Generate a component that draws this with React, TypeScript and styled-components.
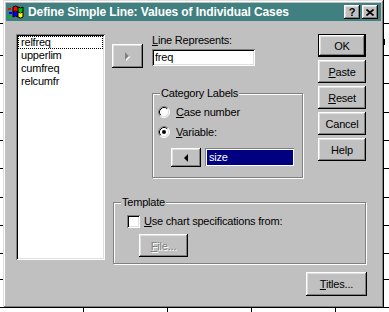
import styled, { createGlobalStyle } from 'styled-components';

const GlobalStyle = createGlobalStyle`
  html, body {
    margin: 0;
    padding: 0;
    background: #fff;
  }
  body {
    font-family: "Liberation Sans", Arial, sans-serif;
    font-size: 11px;
    letter-spacing: -0.2px;
    color: #000;
  }
  * {
    box-sizing: border-box;
  }
`;

const tickRows = [23, 55, 83, 112, 140, 168, 197, 225, 253, 279];
const tickCols = [83, 167, 251, 335];

const raised =
  'inset -1px -1px #000, inset 1px 1px #fff, inset -2px -2px #808080, inset 2px 2px #dfdfdf';
const sunken =
  'inset 1px 1px #808080, inset -1px -1px #fff, inset 2px 2px #000, inset -2px -2px #dfdfdf';

const ChartBehind = () => (
  <Backdrop width="389" height="312" viewBox="0 0 389 312">
    {tickRows.map((y) => (
      <g key={y}>
        <rect x="0" y={y} width="4" height="1" fill="#000" />
        <rect x="383" y={y} width="6" height="1" fill="#000" />
      </g>
    ))}
    <rect x="383" y="39" width="2" height="6" fill="#000" />
    <rect x="0" y="307" width="389" height="1" fill="#000" />
    {tickCols.map((x) => (
      <rect key={x} x={x} y="307" width="1" height="5" fill="#000" />
    ))}
  </Backdrop>
);

const AppIcon = () => (
  <svg width="16" height="16" viewBox="0 0 16 16">
    <defs>
      <clipPath id="flag">
        <path d="M5 3 Q7.5 1 10 3 Q12.5 5 15 3 V13 Q12.5 15 10 13 Q7.5 11 5 13 Z" />
      </clipPath>
    </defs>
    <rect x="0" y="4" width="3" height="2" fill="#ff0000" />
    <rect x="1" y="8" width="3" height="2" fill="#0000ff" />
    <rect x="0" y="12" width="3" height="2" fill="#00c000" />
    <g clipPath="url(#flag)">
      <rect x="4" y="0" width="6" height="8" fill="#ff0000" />
      <rect x="10" y="0" width="6" height="8" fill="#00c000" />
      <rect x="4" y="8" width="6" height="8" fill="#0000ff" />
      <rect x="10" y="8" width="6" height="8" fill="#ffff00" />
    </g>
    <path
      d="M5 3 Q7.5 1 10 3 Q12.5 5 15 3 V13 Q12.5 15 10 13 Q7.5 11 5 13 Z M10 3 V13 M5 8 Q7.5 6 10 8 Q12.5 10 15 8"
      fill="none"
      stroke="#000"
      strokeWidth="1"
    />
  </svg>
);

const CloseGlyph = () => (
  <svg width="8" height="7" viewBox="0 0 8 7">
    <path d="M0.5 0.5 L7.5 6.5 M7.5 0.5 L0.5 6.5" stroke="#000" strokeWidth="1.7" />
  </svg>
);

const RadioMark = ({ checked }: { checked?: boolean }) => (
  <svg width="12" height="12" viewBox="0 0 12 12">
    <circle cx="6" cy="6" r="5" fill="#fff" />
    <path d="M2.11 9.89 A5.5 5.5 0 0 1 9.89 2.11" stroke="#808080" fill="none" />
    <path d="M9.89 2.11 A5.5 5.5 0 0 1 2.11 9.89" stroke="#fff" fill="none" />
    <path d="M2.82 9.18 A4.5 4.5 0 0 1 9.18 2.82" stroke="#000" fill="none" />
    <path d="M9.18 2.82 A4.5 4.5 0 0 1 2.82 9.18" stroke="#dfdfdf" fill="none" />
    {checked && <circle cx="6" cy="6" r="2" fill="#000" />}
  </svg>
);

const RightTriangle = () => (
  <svg width="6" height="9" viewBox="0 0 6 9">
    <polygon points="1,1 5,5 1,9" fill="#fff" />
    <polygon points="0,0 4,4 0,8" fill="#808080" />
  </svg>
);

const LeftTriangle = () => (
  <svg width="4" height="8" viewBox="0 0 4 8">
    <polygon points="4,0 0,4 4,8" fill="#000" />
  </svg>
);

const App = () => {
	return (
		<>
			<GlobalStyle />
			<Screen>
				<ChartBehind />
				<Window>
					<TitleBar>
						<AppIcon />
						<Caption>Define Simple Line: Values of Individual Cases</Caption>
						<CaptionButton>?</CaptionButton>
						<CaptionButton $gap>
							<CloseGlyph />
						</CaptionButton>
					</TitleBar>
					<Body>
						<ListBox>
							<ListItem $focused>relfreq</ListItem>
							<ListItem>upperlim</ListItem>
							<ListItem>cumfreq</ListItem>
							<ListItem>relcumfr</ListItem>
						</ListBox>
						<Side>
							<TopRow>
								<MoveButton $w={31} $h={24} $mt={10}>
									<RightTriangle />
								</MoveButton>
								<Fields>
									<FieldLabel>
										<u>L</u>ine Represents:
									</FieldLabel>
									<TextField>freq</TextField>
									<Group $w={151} $h={85} $mt={27} $pt={10} $pl={5}>
										<GroupTitle>Category Labels</GroupTitle>
										<OptionRow>
											<RadioMark />
											<span>
												<u>C</u>ase number
											</span>
										</OptionRow>
										<OptionRow $mt={4}>
											<RadioMark checked />
											<span>
												<u>V</u>ariable:
											</span>
										</OptionRow>
										<PickRow>
											<MoveButton $w={30} $h={19}>
												<LeftTriangle />
											</MoveButton>
											<SelectedField>size</SelectedField>
										</PickRow>
									</Group>
								</Fields>
								<ButtonColumn>
									<PushButton $default>OK</PushButton>
									<PushButton>
										<u>P</u>aste
									</PushButton>
									<PushButton>
										<u>R</u>eset
									</PushButton>
									<PushButton>Cancel</PushButton>
									<PushButton>Help</PushButton>
								</ButtonColumn>
							</TopRow>
							<Group $w={253} $h={62} $mt={24} $ml={1} $pt={10} $pl={13}>
								<GroupTitle>Template</GroupTitle>
								<OptionRow $gap={4}>
									<CheckBox />
									<span>
										<u>U</u>se chart specifications from:
									</span>
								</OptionRow>
								<PushButton $w={49} $mt={5} $ml={12} disabled>
									<u>F</u>ile...
								</PushButton>
							</Group>
							<Footer>
								<PushButton $w={61} $h={24}>
									<u>T</u>itles...
								</PushButton>
							</Footer>
						</Side>
					</Body>
				</Window>
			</Screen>
		</>
	);
};

export default App;

const Screen = styled.div`
	position: relative;
	width: 389px;
	height: 312px;
	overflow: hidden;
	background: #fff;
`;

const Backdrop = styled.svg`
	position: absolute;
	left: 0;
	top: 0;
	display: block;
`;

const Window = styled.div`
	position: absolute;
	left: 3px;
	top: 0;
	width: 381px;
	height: 308px;
	padding: 3px;
	background: #c0c0c0;
	box-shadow: inset -1px -1px #000, inset 1px 1px #dfdfdf, inset -2px -2px #808080,
		inset 2px 2px #fff;
	display: flex;
	flex-direction: column;
`;

const TitleBar = styled.div`
	height: 18px;
	display: flex;
	align-items: center;
	padding: 0 3px 0 2px;
	background: #408080;
	color: #fff;
`;

const Caption = styled.div`
	flex: 1;
	margin-left: 4px;
	font-weight: bold;
	font-size: 12px;
	letter-spacing: -0.1px;
	white-space: nowrap;
`;

const CaptionButton = styled.div<{ $gap?: boolean }>`
	width: 16px;
	height: 14px;
	margin-left: ${({ $gap }) => ($gap ? '2px' : '0')};
	display: flex;
	align-items: center;
	justify-content: center;
	background: #c0c0c0;
	box-shadow: ${raised};
	color: #000;
	font-weight: bold;
	font-size: 11px;
	line-height: 14px;
`;

const Body = styled.div`
	flex: 1;
	display: flex;
	align-items: flex-start;
	padding: 13px 0 0 10px;
`;

const ListBox = styled.div`
	width: 89px;
	height: 226px;
	padding: 2px;
	background: #fff;
	box-shadow: ${sunken};
`;

const ListItem = styled.div<{ $focused?: boolean }>`
	height: 13px;
	line-height: 11px;
	padding: 0 2px;
	border: 1px ${({ $focused }) => ($focused ? 'dotted #000' : 'solid transparent')};
	white-space: nowrap;
`;

const Side = styled.div`
	margin-left: 7px;
	display: flex;
	flex-direction: column;
`;

const TopRow = styled.div`
	display: flex;
	align-items: flex-start;
`;

const MoveButton = styled.div<{ $w: number; $h: number; $mt?: number }>`
	width: ${({ $w }) => $w}px;
	height: ${({ $h }) => $h}px;
	margin-top: ${({ $mt }) => $mt ?? 0}px;
	display: flex;
	align-items: center;
	justify-content: center;
	background: #c0c0c0;
	box-shadow: ${raised};
`;

const Fields = styled.div`
	width: 152px;
	margin-left: 9px;
	display: flex;
	flex-direction: column;
`;

const FieldLabel = styled.div`
	height: 13px;
	line-height: 13px;
`;

const TextField = styled.div`
	width: 103px;
	height: 17px;
	margin-top: 2px;
	padding: 2px 3px;
	line-height: 13px;
	background: #fff;
	box-shadow: ${sunken};
`;

const Group = styled.div<{ $w: number; $h: number; $mt: number; $ml?: number; $pt: number; $pl: number }>`
	position: relative;
	width: ${({ $w }) => $w}px;
	height: ${({ $h }) => $h}px;
	margin-top: ${({ $mt }) => $mt}px;
	margin-left: ${({ $ml }) => $ml ?? 0}px;
	padding: ${({ $pt, $pl }) => `${$pt}px 0 0 ${$pl}px`};
	border: 1px solid #808080;
	box-shadow: 1px 1px 0 #fff, inset 1px 1px 0 #fff;
	display: flex;
	flex-direction: column;
	align-items: flex-start;
`;

const GroupTitle = styled.div`
	position: absolute;
	top: -7px;
	left: 7px;
	padding: 0 1px;
	line-height: 13px;
	background: #c0c0c0;
`;

const OptionRow = styled.div<{ $mt?: number; $gap?: number }>`
	height: 16px;
	margin-top: ${({ $mt }) => $mt ?? 0}px;
	display: flex;
	align-items: center;
	gap: ${({ $gap }) => $gap ?? 6}px;
	white-space: nowrap;
`;

const PickRow = styled.div`
	margin: 8px 0 0 13px;
	display: flex;
	align-items: flex-start;
	gap: 4px;
`;

const SelectedField = styled.div`
	width: 89px;
	height: 18px;
	padding: 2px 4px;
	line-height: 14px;
	color: #fff;
	background: #000080;
	box-shadow: inset 1px 1px #808080, inset -1px -1px #fff, inset 2px 2px #fff;
`;

const CheckBox = styled.div`
	width: 13px;
	height: 13px;
	background: #fff;
	box-shadow: ${sunken};
`;

const ButtonColumn = styled.div`
	margin-left: 14px;
	display: flex;
	flex-direction: column;
	gap: 3px;
`;

const PushButton = styled.button<{ $default?: boolean; $w?: number; $h?: number; $mt?: number; $ml?: number }>`
	width: ${({ $w }) => $w ?? 48}px;
	height: ${({ $h }) => $h ?? 23}px;
	margin: ${({ $mt, $ml }) => `${$mt ?? 0}px 0 0 ${$ml ?? 0}px`};
	padding: 0;
	border: ${({ $default }) => ($default ? '1px solid #000' : 'none')};
	background: #c0c0c0;
	box-shadow: ${raised};
	font: inherit;
	letter-spacing: inherit;
	color: #000;
	&:disabled {
		color: #808080;
		text-shadow: 1px 1px 0 #fff;
	}
`;

const Footer = styled.div`
	width: 254px;
	margin: 8px 0 0 1px;
	display: flex;
	justify-content: flex-end;
`;
